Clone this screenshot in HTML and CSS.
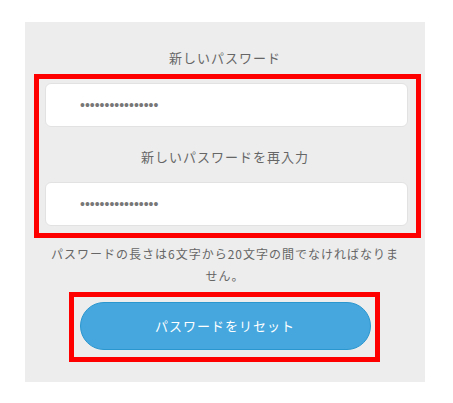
FILE: index.html
```html
<!DOCTYPE html>
<html lang="ja">
<head>
<meta charset="utf-8">
<link rel="stylesheet" href="styles.css">
</head>
<body>
<div class="panel">
  <label class="label first">新しいパスワード</label>
  <input class="field" type="password" value="passwordpassword">
  <label class="label second">新しいパスワードを再入力</label>
  <input class="field" type="password" value="passwordpassword">
  <p class="help">パスワードの長さは6文字から20文字の間でなければなりません。</p>
  <button class="submit" type="button">パスワードをリセット</button>
  <div class="mark mark-fields"></div>
  <div class="mark mark-button"></div>
</div>
</body>
</html>
```

FILE: styles.css
```css
html, body {
  margin: 0;
  padding: 0;
  background: #ffffff;
}
body {
  font-family: "Noto Sans CJK JP", "Noto Sans", sans-serif;
}
.panel {
  position: relative;
  margin: 22px 0 0 25px;
  width: 400px;
  box-sizing: border-box;
  padding: 26px 0 32px;
  background: #ededed;
  display: flex;
  flex-direction: column;
  align-items: center;
}
.label {
  display: block;
  height: 20px;
  line-height: 20px;
  font-size: 13px;
  letter-spacing: 1px;
  color: #666666;
  text-align: center;
}
.label.second {
  margin-top: 20px;
}
.field {
  align-self: flex-start;
  margin: 15px 0 0 20px;
  width: 363px;
  height: 44px;
  box-sizing: border-box;
  padding: 0 0 0 34px;
  border: 1px solid #e2e2e2;
  border-radius: 6px;
  background: #ffffff;
  font-family: "Liberation Sans", sans-serif;
  font-size: 14px;
  color: #777777;
  outline: none;
}
.help {
  margin: 17px 0 0;
  width: 356px;
  font-size: 12px;
  line-height: 22px;
  letter-spacing: 1px;
  color: #666666;
  text-align: center;
}
.submit {
  margin-top: 15px;
  width: 291px;
  height: 48px;
  border: 1px solid #2b97cf;
  border-radius: 24px;
  background: #45a7de;
  color: #ffffff;
  font-family: "Noto Sans CJK JP", "Noto Sans", sans-serif;
  font-size: 13px;
  letter-spacing: 1px;
  padding: 0 0 2px;
}
.mark {
  position: absolute;
  box-sizing: border-box;
  border: 5px solid #ff0000;
  pointer-events: none;
}
.mark-fields {
  left: 9px;
  top: 52px;
  width: 387px;
  height: 164px;
}
.mark-button {
  left: 44px;
  top: 270px;
  width: 311px;
  height: 70px;
}
```
